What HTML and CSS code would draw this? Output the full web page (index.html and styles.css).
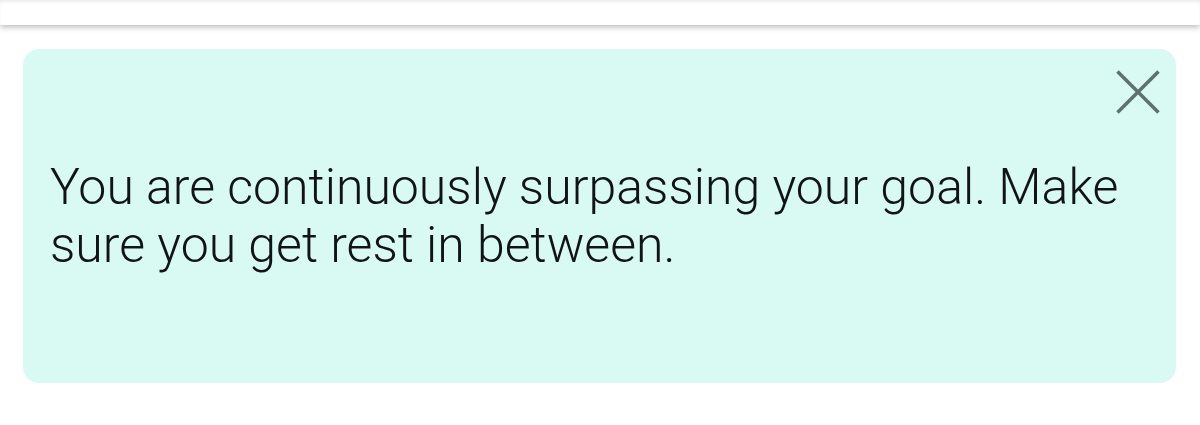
FILE: index.html
```html
<!DOCTYPE html>
<html>
<head>
	<meta charset="utf-8">
	<meta name="viewport" content="width=device-width, initial-scale=1.0">
	<title>Activity tip</title>
	<link rel="stylesheet" href="styles.css">
</head>
<body>
	<div class="app-bar"></div>
	<div class="tip-card">
		<div class="tip-head">
			<button class="tip-close" aria-label="Close">
				<svg viewBox="0 0 44 44" width="44" height="44">
					<path d="M1.5 1.5 L42.5 42.5 M42.5 1.5 L1.5 42.5" />
				</svg>
			</button>
		</div>
		<p class="tip-text">You are continuously surpassing your goal. Make sure you get rest in between.</p>
	</div>
</body>
</html>
```

FILE: styles.css
```css
body {
	margin: 0;
	background-color: #ffffff;
	font-family: 'Roboto', sans-serif;
	overflow: hidden;
}

.app-bar {
	height: 25px;
	background-color: #ffffff;
	box-shadow: 0 2px 6px rgba(0, 0, 0, 0.28), inset 0 3px 4px -2px rgba(0, 0, 0, 0.12);
}

.tip-card {
	display: flex;
	flex-direction: column;
	margin: 24px 24px 0 23px;
	height: 334px;
	box-sizing: border-box;
	padding: 21px 16px 0 27px;
	background-color: #d9f9f3;
	border-radius: 16px;
}

.tip-head {
	display: flex;
	justify-content: flex-end;
}

.tip-close {
	display: flex;
	padding: 0;
	border: 0;
	background: none;
}

.tip-close path {
	fill: none;
	stroke: #5f716e;
	stroke-width: 3.5;
}

.tip-text {
	margin: 44px 0 0 0;
	font-size: 50px;
	font-weight: 300;
	line-height: 58px;
	color: #111414;
}
```
